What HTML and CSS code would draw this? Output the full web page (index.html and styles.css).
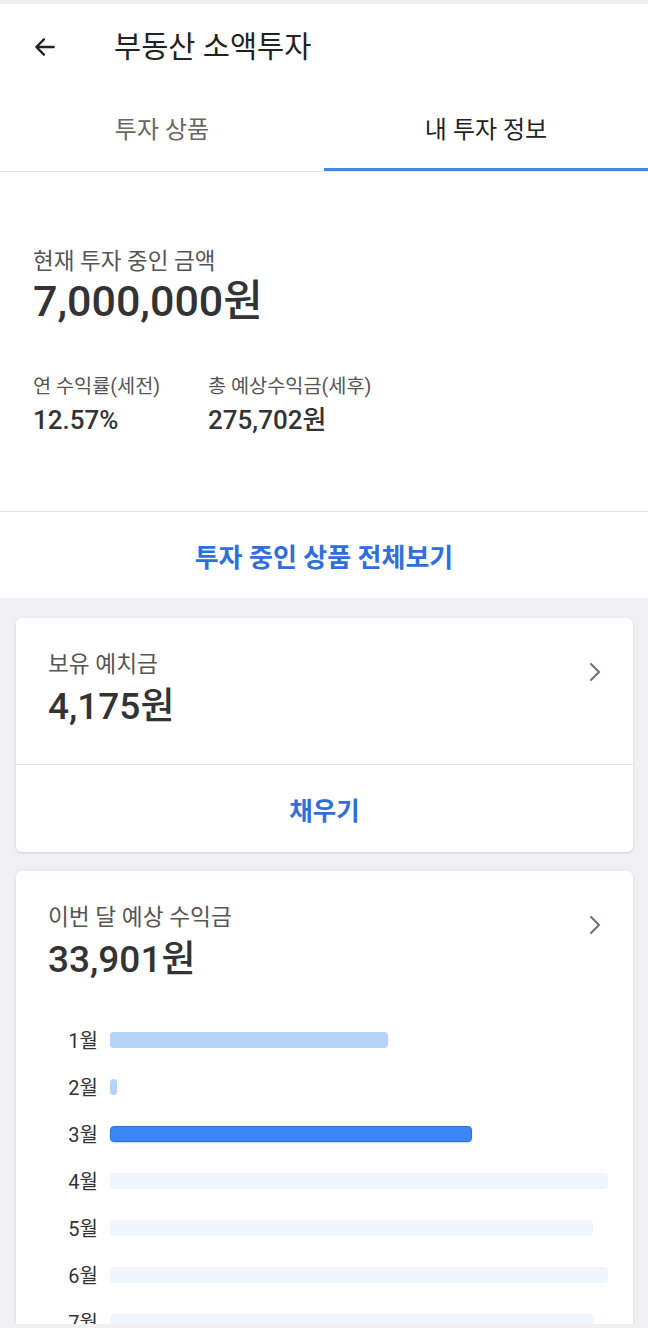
FILE: index.html
```html
<!DOCTYPE html>
<html lang="ko">
<head>
<meta charset="utf-8">
<title>부동산 소액투자</title>
<link rel="stylesheet" href="styles.css">
</head>
<body>
<div class="app">
  <div class="status-strip"></div>
  <header class="appbar">
    <span class="back">
      <svg width="26" height="26" viewBox="0 0 24 24"><path d="M20 12H4.5M11 5l-7 7 7 7" fill="none" stroke="#222" stroke-width="2.2" stroke-linecap="round" stroke-linejoin="round"/></svg>
    </span>
    <h1 class="title">부동산 소액투자</h1>
  </header>
  <nav class="tabs">
    <div class="tab">투자 상품</div>
    <div class="tab active">내 투자 정보</div>
  </nav>

  <section class="summary">
    <div class="sum-label">현재 투자 중인 금액</div>
    <div class="sum-amount">7,000,000원</div>
    <div class="sum-stats">
      <div class="stat stat-first">
        <div class="stat-label">연 수익률(세전)</div>
        <div class="stat-value">12.57%</div>
      </div>
      <div class="stat">
        <div class="stat-label">총 예상수익금(세후)</div>
        <div class="stat-value">275,702원</div>
      </div>
    </div>
  </section>
  <div class="link-row">투자 중인 상품 전체보기</div>

  <main class="cards">
    <div class="card">
      <div class="card-head">
        <div>
          <div class="card-label">보유 예치금</div>
          <div class="card-amount">4,175원</div>
        </div>
        <span class="chev"><svg width="14" height="22" viewBox="0 0 14 22"><path d="M3 3l8 8-8 8" fill="none" stroke="#6b717b" stroke-width="2" stroke-linecap="round" stroke-linejoin="round"/></svg></span>
      </div>
      <div class="card-action">채우기</div>
    </div>

    <div class="card card-chart">
      <div class="card-head card-head-chart">
        <div>
          <div class="card-label">이번 달 예상 수익금</div>
          <div class="card-amount">33,901원</div>
        </div>
        <span class="chev"><svg width="14" height="22" viewBox="0 0 14 22"><path d="M3 3l8 8-8 8" fill="none" stroke="#6b717b" stroke-width="2" stroke-linecap="round" stroke-linejoin="round"/></svg></span>
      </div>
      <div class="chart">
        <div class="row"><span class="m">1월</span><div class="track"><div class="bar past" style="width:278px"></div></div></div>
        <div class="row"><span class="m">2월</span><div class="track"><div class="bar past" style="width:7px"></div></div></div>
        <div class="row"><span class="m">3월</span><div class="track"><div class="bar now" style="width:362px"></div></div></div>
        <div class="row"><span class="m">4월</span><div class="track"><div class="bar future" style="width:498px"></div></div></div>
        <div class="row"><span class="m">5월</span><div class="track"><div class="bar future" style="width:483px"></div></div></div>
        <div class="row"><span class="m">6월</span><div class="track"><div class="bar future" style="width:498px"></div></div></div>
        <div class="row"><span class="m">7월</span><div class="track"><div class="bar future" style="width:483px"></div></div></div>
      </div>
    </div>
  </main>
</div>
</body>
</html>
```

FILE: styles.css
```css
html, body {
  margin: 0;
  padding: 0;
  overflow: hidden;
}
body {
  background: #f0f0f2;
  font-family: Roboto, "Noto Sans CJK KR", sans-serif;
  color: #333335;
}
.app {
  height: 1324px;
  overflow: hidden;
  background: #f0f0f2;
}
.status-strip {
  height: 4px;
  background: #f1f1f3;
}
.appbar {
  height: 86px;
  background: #fff;
  display: flex;
  align-items: center;
}
.back {
  width: 26px;
  height: 26px;
  margin-left: 32px;
  display: flex;
}
.title {
  margin: 0 0 0 56px;
  font-size: 29.5px;
  font-weight: 400;
  color: #222;
  line-height: 40px;
}
.tabs {
  display: flex;
  background: #fff;
  border-bottom: 1px solid #e6e6e8;
}
.tab {
  flex: 1;
  height: 81px;
  box-sizing: border-box;
  padding-bottom: 4px;
  display: flex;
  align-items: center;
  justify-content: center;
  font-size: 24px;
  color: #666;
  border-bottom: 3px solid transparent;
}
.tab.active {
  color: #222;
  border-bottom-color: #4287e6;
}
.summary {
  background: #fff;
  padding: 74px 33px 74px;
  border-bottom: 1px solid #e4e4e6;
}
.sum-label {
  font-size: 22.5px;
  line-height: 30px;
  color: #555;
}
.sum-amount {
  font-size: 43px;
  line-height: 50px;
  font-weight: 500;
  color: #333335;
}
.sum-stats {
  display: flex;
  margin-top: 48px;
}
.stat-first {
  width: 175px;
}
.stat-label {
  font-size: 19.7px;
  line-height: 26px;
  color: #555;
}
.stat-value {
  margin-top: 3px;
  font-size: 26px;
  line-height: 34px;
  font-weight: 500;
  color: #333335;
}
.link-row {
  background: #fff;
  height: 86px;
  display: flex;
  align-items: center;
  justify-content: center;
  font-size: 26px;
  font-weight: 700;
  color: #2f6fdb;
}
.cards {
  padding: 20px 15px 0 16px;
  display: flex;
  flex-direction: column;
  gap: 19px;
}
.card {
  background: #fff;
  border-radius: 6px;
  box-shadow: 0 1px 3px rgba(0, 0, 0, 0.13);
}
.card-head {
  display: flex;
  justify-content: space-between;
  align-items: flex-start;
  padding: 32px 31px 33px 32px;
  border-bottom: 1px solid #e4e4e6;
}
.card-head-chart {
  border-bottom: none;
  padding-bottom: 32px;
}
.chev {
  display: flex;
  margin-top: 11px;
}
.card-label {
  font-size: 22.7px;
  line-height: 30px;
  color: #555;
}
.card-amount {
  margin-top: 3px;
  font-size: 37px;
  line-height: 48px;
  font-weight: 500;
  color: #333335;
}
.card-action {
  height: 87px;
  display: flex;
  align-items: center;
  justify-content: center;
  font-size: 25.5px;
  font-weight: 700;
  color: #2f6fdb;
}
.chart {
  padding: 0 25px 20px 32px;
}
.row {
  height: 47px;
  display: flex;
  align-items: center;
}
.m {
  flex: none;
  width: 50px;
  text-align: right;
  font-size: 20px;
  color: #333;
  margin-right: 12px;
}
.track {
  flex: 1;
  min-width: 0;
  height: 16px;
  display: flex;
}
.bar {
  flex: none;
  height: 16px;
  border-radius: 4px;
  box-sizing: border-box;
}
.bar.past {
  background: #b3d3fb;
}
.bar.now {
  background: #3a86f7;
  border: 1px solid #2e6fd8;
  box-shadow: 0 1px 2px rgba(0, 0, 0, 0.18);
}
.bar.future {
  background: #eff5fd;
}
```
